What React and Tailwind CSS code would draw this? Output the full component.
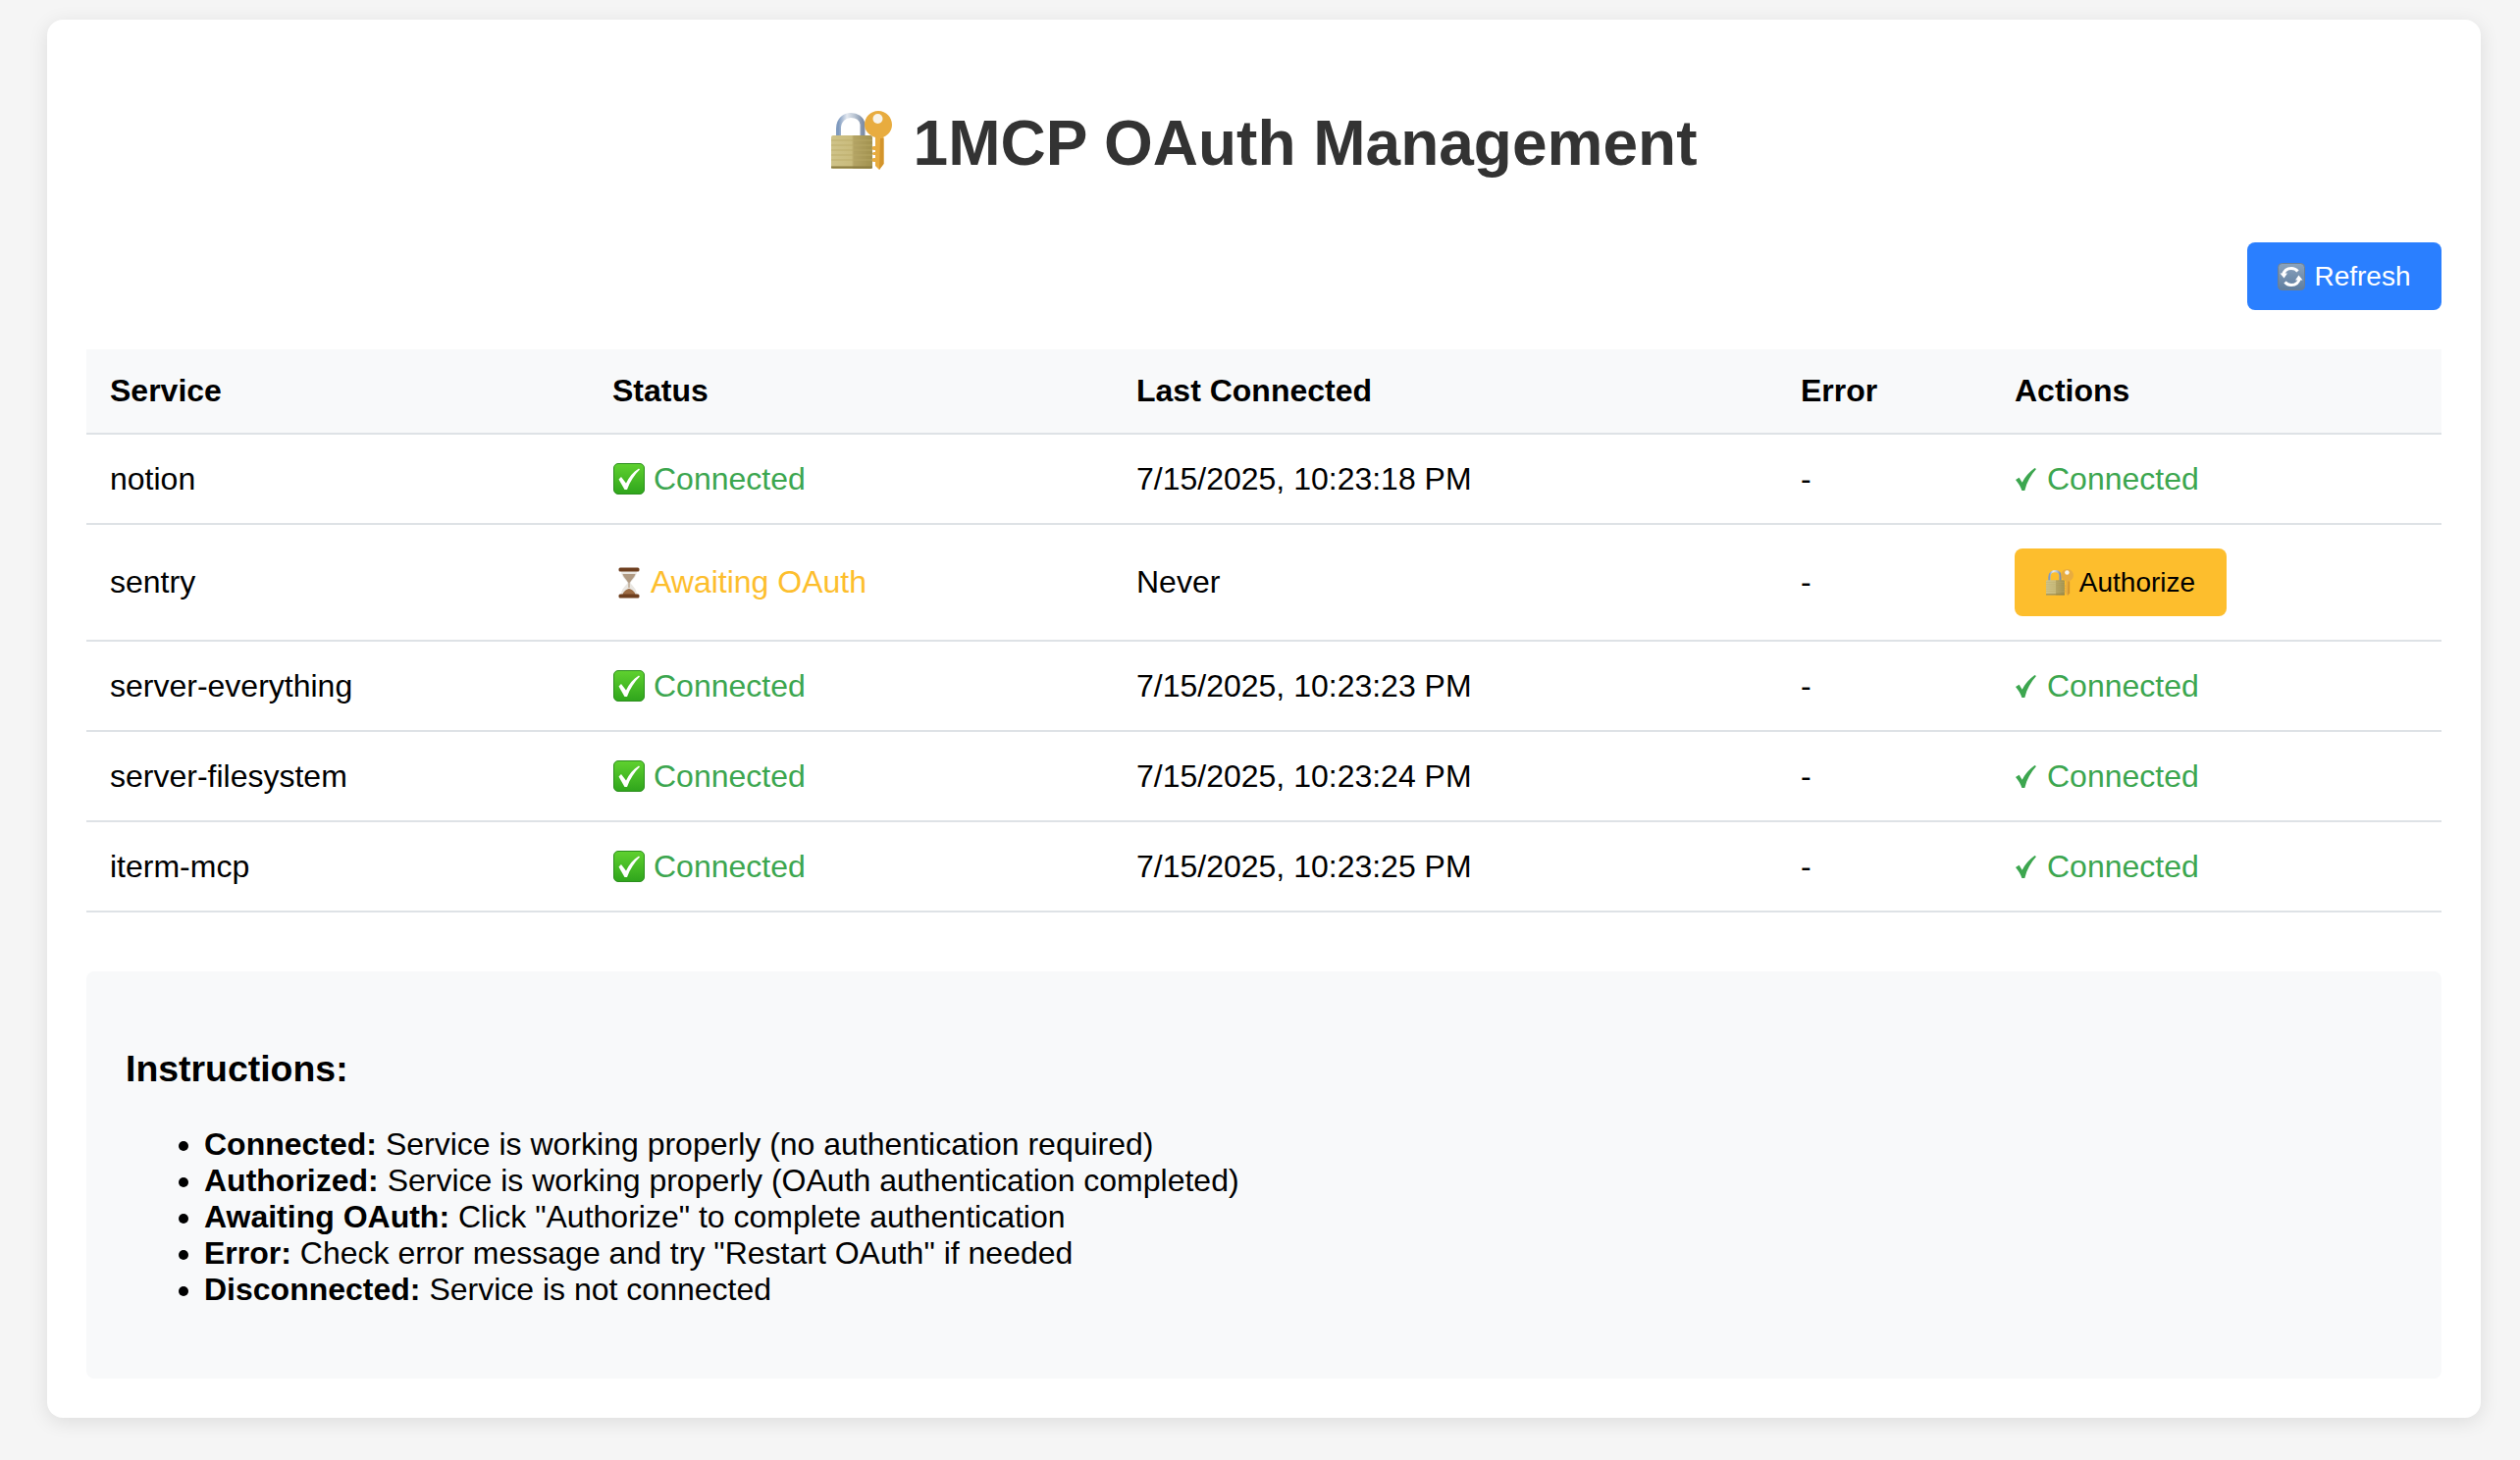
const services = [
  { name: "notion", status: "connected", last: "7/15/2025, 10:23:18 PM" },
  { name: "sentry", status: "awaiting", last: "Never" },
  { name: "server-everything", status: "connected", last: "7/15/2025, 10:23:23 PM" },
  { name: "server-filesystem", status: "connected", last: "7/15/2025, 10:23:24 PM" },
  { name: "iterm-mcp", status: "connected", last: "7/15/2025, 10:23:25 PM" },
]

const instructions = [
  ["Connected:", "Service is working properly (no authentication required)"],
  ["Authorized:", "Service is working properly (OAuth authentication completed)"],
  ["Awaiting OAuth:", 'Click "Authorize" to complete authentication'],
  ["Error:", 'Check error message and try "Restart OAuth" if needed'],
  ["Disconnected:", "Service is not connected"],
]

function LockKeyIcon({ className }) {
  return (
    <svg viewBox="0 0 62 60" className={className}>
      <defs>
        <linearGradient id="shackle" x1="0" y1="0" x2="1" y2="0">
          <stop offset="0" stopColor="#7f9abf" />
          <stop offset="0.35" stopColor="#e4e9f0" />
          <stop offset="0.7" stopColor="#b4c0cf" />
          <stop offset="1" stopColor="#7f8fa8" />
        </linearGradient>
        <linearGradient id="lockbody" x1="0" y1="0" x2="1" y2="0">
          <stop offset="0" stopColor="#cfc389" />
          <stop offset="0.5" stopColor="#c9bb7c" />
          <stop offset="0.55" stopColor="#b3a364" />
          <stop offset="1" stopColor="#a2924f" />
        </linearGradient>
      </defs>
      <path d="M7.500 27V18C7.500 9 14 4.500 20 4.500c6 0 11 3 12 9V27" fill="none" stroke="url(#shackle)" strokeWidth="5" />
      <rect x="0" y="25" width="42" height="34" rx="2" fill="url(#lockbody)" />
      <path d="M0 30h42M0 35h42M0 40h42M0 45h42M0 50h42" stroke="#b9aa68" strokeWidth="0.800" />
      <path d="M0 57.500h42" stroke="#8b7c40" strokeWidth="2" />
      <path
        d="M48 0c8 0 14 6.500 14 14 0 6-3.500 10.500-8.500 12.500V54L49 60l-4-4V27c-6-2-11-6.500-11-13C34 6.500 40 0 48 0z"
        fill="#e8ac3f"
      />
      <path d="M45 36h-1.500a2 2 0 0 0 0 4H45zM45 42h-1.500a1.500 1.500 0 0 0 0 3H45zM45 48h-1.500a2 2 0 0 0 0 4H45z" fill="#e8ac3f" />
      <path d="M50 28h3.500v26L49 60z" fill="#d3942c" />
      <circle cx="47.500" cy="8" r="5" fill="#f8f4ea" />
    </svg>
  )
}

function RefreshIcon({ className }) {
  return (
    <svg viewBox="0 0 28 28" className={className}>
      <defs>
        <linearGradient id="refreshbg" x1="0" y1="0" x2="0" y2="1">
          <stop offset="0" stopColor="#8aa3bd" />
          <stop offset="1" stopColor="#5f7d9f" />
        </linearGradient>
      </defs>
      <rect x="0.500" y="0.500" width="27" height="27" rx="4" fill="url(#refreshbg)" stroke="#6c7f94" />
      <path d="M5.500 12.500C6.500 8 10 5.500 14 5.500c2.700 0 5 1.100 6.500 3" fill="none" stroke="#fff" strokeWidth="3" />
      <path d="M2.500 10.500h7.500l-3.500 5z" fill="#fff" />
      <path d="M22.500 15.500c-1 4.500-4.500 7-8.500 7-2.700 0-5-1.100-6.500-3" fill="none" stroke="#fff" strokeWidth="3" />
      <path d="M25.500 17.500h-7.500l3.500-5z" fill="#fff" />
    </svg>
  )
}

function CheckBoxIcon({ className }) {
  return (
    <svg viewBox="0 0 32 32" className={className}>
      <defs>
        <linearGradient id="checkbg" x1="0" y1="0" x2="0" y2="1">
          <stop offset="0" stopColor="#5fd12f" />
          <stop offset="1" stopColor="#2fa51c" />
        </linearGradient>
      </defs>
      <rect x="0.500" y="0.500" width="31" height="31" rx="4.500" fill="url(#checkbg)" stroke="#2c8f1e" />
      <path d="M5.500 16.500l2.500-2.500 5 6.500C16 14 20 9 26 5.500l1 1C21.500 12 17 18.500 14 27h-2.500z" fill="#fff" />
    </svg>
  )
}

function HourglassIcon({ className }) {
  return (
    <svg viewBox="0 0 22 32" className={className}>
      <path d="M3 4h16c0 6-5 9-6.500 12C14 19 19 22 19 28H3c0-6 5-9 6.500-12C8 13 3 10 3 4z" fill="#e9e6e1" />
      <path d="M4.500 7h13c-1 3.500-4 5.500-5.500 8.500h-2C8.500 12.500 5.500 10.500 4.500 7z" fill="#b09a83" />
      <path d="M10.500 15h1v6h-1z" fill="#a88c70" />
      <path d="M4.500 28c.5-3 4-5.500 6.500-6 2.500.5 6 3 6.500 6z" fill="#9c6b43" />
      <rect x="0.500" y="0.500" width="21" height="4" rx="1.500" fill="#6e3f1f" />
      <rect x="0.500" y="27.500" width="21" height="4" rx="1.500" fill="#6e3f1f" />
    </svg>
  )
}

function TickIcon({ className }) {
  return (
    <svg viewBox="0 0 21 23" className={className}>
      <path d="M0 12l3.600-2.200 3.100 5C9.500 9 14.500 3.500 19.500 0L21 1C15.500 7 11.500 14 9.300 23H6.400C5 19 3 15.500 0 12z" fill="#3ca64f" />
    </svg>
  )
}

function StatusLabel({ status }) {
  if (status === "awaiting") {
    return (
      <span className="flex items-center text-[#fdbe2d]">
        <HourglassIcon className="ml-[6px] mr-[11px] h-[32px] w-[22px]" />
        <span>Awaiting OAuth</span>
      </span>
    )
  }
  return (
    <span className="flex items-center text-[#3ca64f]">
      <CheckBoxIcon className="ml-[1px] mr-[9px] h-[32px] w-[32px]" />
      <span>Connected</span>
    </span>
  )
}

const thClass = "border-b-2 border-[#dee2e6] px-[24px] font-bold"
const tdClass = "border-b-2 border-[#dee2e6] px-[24px]"

export default function App() {
  return (
    <div className="min-h-screen bg-[#f5f5f5] pl-[48px] pr-[40px] pt-[20px] pb-[43px] font-['Liberation_Sans',Arial,sans-serif] text-[32px] leading-[37px] text-black">
      <div className="rounded-[16px] bg-white p-[40px] shadow-[0_4px_20px_rgba(0,0,0,0.1)]">
        <h1 className="mt-[46px] mb-[61px] flex h-[80px] items-center justify-center text-[64px] font-bold leading-[74px] text-[#333333]">
          <LockKeyIcon className="mr-[22px] mb-[6px] h-[60px] w-[62px]" />
          <span>1MCP OAuth Management</span>
        </h1>

        <div className="mb-[40px] flex justify-end">
          <button className="flex h-[69px] w-[198px] items-center justify-center rounded-[8px] bg-[#2a7fff] text-[28px] text-white">
            <RefreshIcon className="mr-[9px] h-[28px] w-[28px]" />
            Refresh
          </button>
        </div>

        <table className="w-full table-fixed border-separate border-spacing-0 text-left">
          <colgroup>
            <col className="w-[512px]" />
            <col className="w-[534px]" />
            <col className="w-[677px]" />
            <col className="w-[218px]" />
            <col className="w-[459px]" />
          </colgroup>
          <thead>
            <tr className="h-[87px] bg-[#f8f9fa]">
              <th className={thClass}>Service</th>
              <th className={thClass}>Status</th>
              <th className={thClass}>Last Connected</th>
              <th className={thClass}>Error</th>
              <th className={thClass}>Actions</th>
            </tr>
          </thead>
          <tbody>
            {services.map((service) => (
              <tr key={service.name} className={service.status === "awaiting" ? "h-[119px]" : "h-[92px]"}>
                <td className={tdClass}>{service.name}</td>
                <td className={tdClass}>
                  <StatusLabel status={service.status} />
                </td>
                <td className={tdClass}>{service.last}</td>
                <td className={tdClass}>-</td>
                <td className={tdClass}>
                  {service.status === "awaiting" ? (
                    <button className="flex h-[69px] w-[216px] items-center justify-center rounded-[8px] bg-[#fdbe2d] text-[28px] text-black">
                      <LockKeyIcon className="mr-[6px] h-[27px] w-[28px]" />
                      Authorize
                    </button>
                  ) : (
                    <span className="flex items-center text-[#3ca64f]">
                      <TickIcon className="ml-[1px] mr-[11px] h-[23px] w-[21px]" />
                      <span>Connected</span>
                    </span>
                  )}
                </td>
              </tr>
            ))}
          </tbody>
        </table>

        <div className="mt-[60px] rounded-[8px] bg-[#f8f9fa] p-[40px]">
          <h3 className="mt-[38px] mb-[37px] text-[37.44px] font-bold leading-[43px]">Instructions:</h3>
          <ul className="mb-[32px] list-disc pl-[80px]">
            {instructions.map(([label, text]) => (
              <li key={label}>
                <strong className="font-bold">{label}</strong> {text}
              </li>
            ))}
          </ul>
        </div>
      </div>
    </div>
  )
}
